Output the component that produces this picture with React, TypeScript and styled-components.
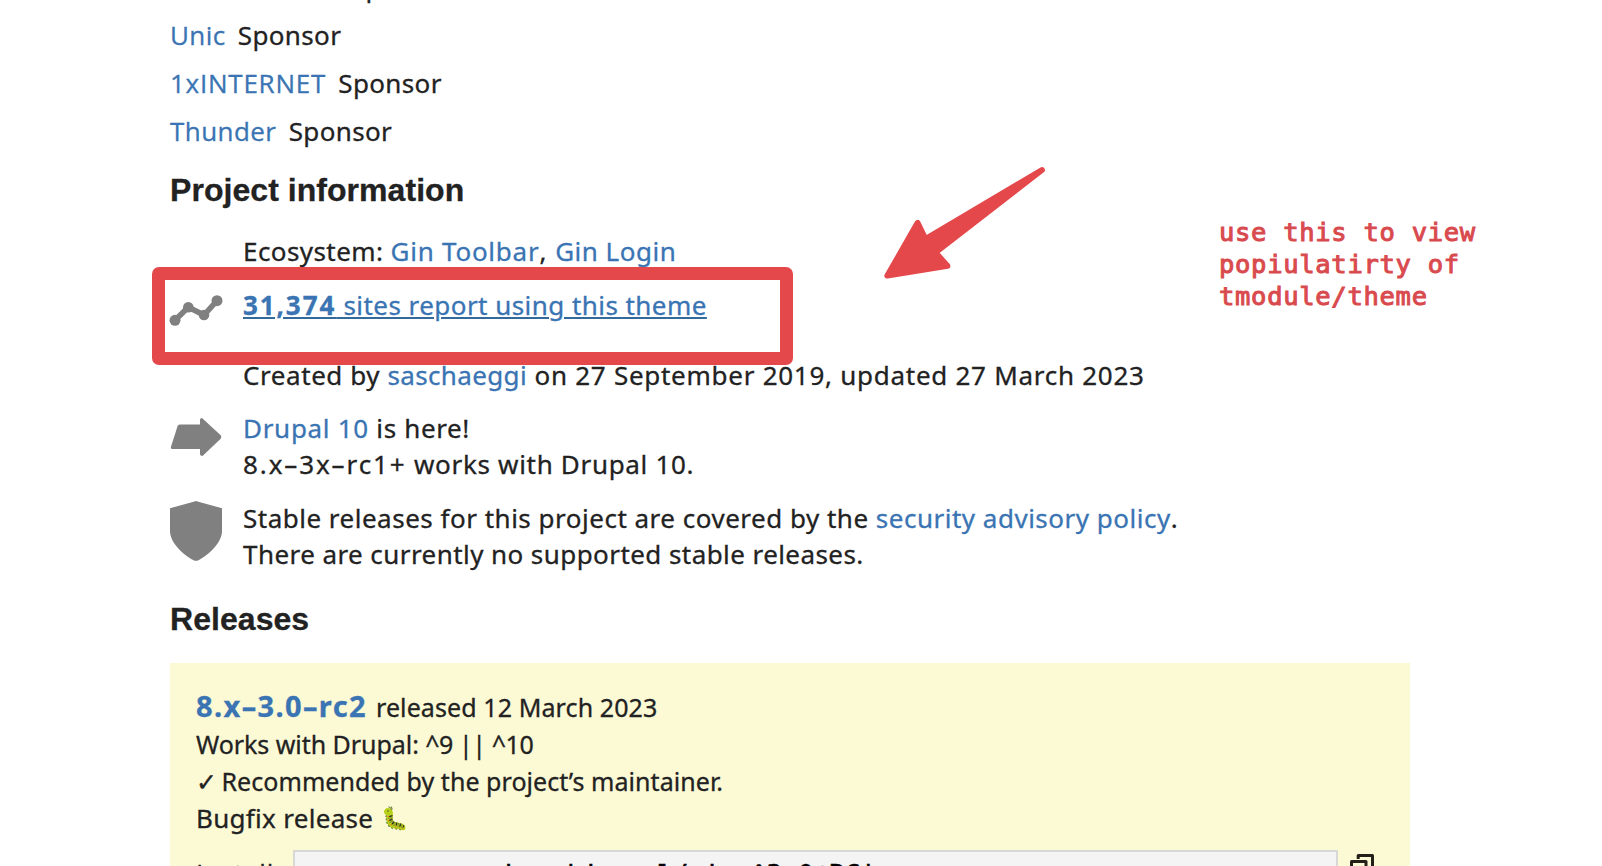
import React from 'react';
import styled, { createGlobalStyle } from 'styled-components';

const GlobalStyle = createGlobalStyle`
  html, body { margin: 0; padding: 0; background: #fff; }
  body { overflow: hidden; }
`;

const RED = '#e4484b';

const Page = styled.main`
  position: relative;
  box-sizing: border-box;
  height: 866px;
  padding-left: 170px;
  overflow: hidden;
  display: flex;
  flex-direction: column;
  color: #222;
  font: 26px/36px 'Noto Sans', 'Open Sans', sans-serif;
  -webkit-text-stroke: 0.3px;
`;

const Text = styled.span<{ $track?: number }>`
  letter-spacing: ${(p) => p.$track ?? 0.35}px;
  white-space: pre;
`;

const Link = styled.a<{ $track?: number }>`
  color: #3a74b3;
  letter-spacing: ${(p) => p.$track ?? 0.35}px;
  text-decoration: none;
  white-space: pre;
`;

const Sponsors = styled.ul`
  display: flex;
  flex: none;
  flex-direction: column;
  gap: 12px;
  margin: -31px 0 22px;
  padding: 0;
  list-style: none;
`;

const Sponsor = styled.li`
  display: flex;
  gap: 12.3px;
`;

const SponsorLink = styled(Link)`
  font-family: 'Open Sans', sans-serif;
`;

const Heading = styled.h3`
  flex: none;
  margin: 0;
  font: bold 32px/38px 'Liberation Sans', Arial, sans-serif;
  letter-spacing: 0.05px;
`;

const InfoList = styled.div`
  display: flex;
  flex: none;
  flex-direction: column;
  margin: 24px 0 28px;
`;

const InfoRow = styled.div<{ $gap?: number }>`
  display: grid;
  grid-template-columns: 52px 1fr;
  column-gap: 21px;
  align-items: start;
  margin-top: ${(p) => p.$gap ?? 0}px;
`;

const InfoBody = styled.div`
  grid-column: 2;
  display: flex;
  flex-direction: column;
`;

const Line = styled.div`
  height: 36px;
  white-space: nowrap;
`;

const UsageLink = styled.a`
  color: #3a74b3;
  letter-spacing: 0.45px;
  text-decoration: underline;
  text-decoration-color: #33699b;
  text-decoration-thickness: 2px;
  text-underline-offset: 2px;
  white-space: pre;
`;

const Count = styled.strong`
  letter-spacing: 1.9px;
`;

const Icon = styled.svg<{ $top: number }>`
  display: block;
  margin-top: ${(p) => p.$top}px;
  overflow: visible;
  fill: #808080;
`;

const ReleaseBox = styled.section`
  box-sizing: border-box;
  flex: none;
  display: flex;
  flex-direction: column;
  width: 1240px;
  height: 260px;
  margin-top: 25px;
  padding: 24px 26px 0;
  background: #fcf9d5;
  font-size: 25px;
`;

const ReleaseTitle = styled.div`
  display: flex;
  align-items: baseline;
  gap: 9px;
  height: 39px;
  line-height: 37px;
`;

const Version = styled(Link)`
  font-size: 29px;
  font-weight: bold;
`;

const ReleaseLine = styled.div`
  display: flex;
  height: 37px;
  line-height: 37px;
`;

const Check = styled.span`
  width: 25.5px;
`;

const Notes = styled.div`
  display: flex;
  align-items: flex-start;
  height: 50px;
  font-size: 26px;
`;

const Bug = styled.span`
  margin-left: 8px;
  font-size: 22px;
  line-height: 34px;
`;

const InstallRow = styled.div`
  display: flex;
  align-items: flex-start;
  font-size: 26px;
`;

const InstallLabel = styled.span`
  width: 97px;
  padding-top: 5px;
  font-family: 'Open Sans', sans-serif;
  letter-spacing: 0.8px;
`;

const Command = styled.code`
  box-sizing: border-box;
  width: 1045px;
  height: 56px;
  padding: 5px 2px;
  border: 2px solid #d8d8d6;
  background: #f4f4f4;
  color: #000;
  font: 26px/36px 'DejaVu Sans Mono', monospace;
  white-space: pre;
  -webkit-text-stroke: 0.6px;
`;

const CopyIcon = styled.svg`
  margin: 4px 0 0 12px;
  fill: none;
  stroke: #222018;
  stroke-width: 3;
  stroke-linejoin: round;
`;

const Highlight = styled.div`
  position: absolute;
  left: 151.5px;
  top: 266.5px;
  box-sizing: border-box;
  width: 641.5px;
  height: 98.5px;
  border: 13.5px solid ${RED};
  border-radius: 7px;
`;

const Pointer = styled.svg`
  position: absolute;
  left: 880px;
  top: 160px;
  fill: ${RED};
  stroke: ${RED};
  stroke-width: 5.8;
  stroke-linejoin: round;
`;

const Note = styled.p`
  position: absolute;
  left: 1219px;
  top: 216px;
  margin: 0;
  color: #d94a4e;
  font: 25.5px/32px 'DejaVu Sans Mono', monospace;
  letter-spacing: 0.7px;
  -webkit-text-stroke: 1px #d94a4e;
`;

const sponsors = [
  { name: 'Factorial GmbH', track: -1.4 },
  { name: 'Unic', track: 0.4 },
  { name: '1xINTERNET', track: 0.75 },
  { name: 'Thunder', track: 0.45 },
];

export default function App() {
  return (
    <Page>
      <GlobalStyle />
      <Sponsors>
        {sponsors.map((s) => (
          <Sponsor key={s.name}>
            <SponsorLink $track={s.track}>{s.name}</SponsorLink>
            <Text>Sponsor</Text>
          </Sponsor>
        ))}
      </Sponsors>

      <Heading>Project information</Heading>
      <InfoList>
        <InfoRow>
          <InfoBody>
            <Line>
              <Text $track={0.42}>{'Ecosystem: '}</Text>
              <Link $track={0.75}>Gin Toolbar</Link>
              <Text $track={1}>{', '}</Text>
              <Link $track={0.5}>Gin Login</Link>
            </Line>
          </InfoBody>
        </InfoRow>
        <InfoRow $gap={18}>
          <Icon $top={8} width="52" height="28" viewBox="0 0 52 28">
            <path d="M5 25.3 18.3 12.2 34 20 47 5.7" fill="none" stroke="#808080" strokeWidth="5.5" />
            <circle cx="5" cy="25.3" r="5.5" />
            <circle cx="18.3" cy="12.2" r="5.3" />
            <circle cx="34" cy="20" r="5.3" />
            <circle cx="47" cy="5.7" r="5.5" />
          </Icon>
          <InfoBody>
            <Line>
              <UsageLink>
                <Count>31,374</Count> sites report using this theme
              </UsageLink>
            </Line>
          </InfoBody>
        </InfoRow>
        <InfoRow $gap={34}>
          <InfoBody>
            <Line>
              <Text $track={0.57}>{'Created by '}</Text>
              <Link $track={0.35}>saschaeggi</Link>
              <Text $track={0.73}>{' on 27 September 2019, updated 27 March 2023'}</Text>
            </Line>
          </InfoBody>
        </InfoRow>
        <InfoRow $gap={17}>
          <Icon $top={8} width="52" height="38" viewBox="0 0 52 38">
            <path d="M9.8 6.5H30V1.8Q30 0 32 0L50.7 17.3Q52 19 50.7 20.7L32.5 38Q30 38 30 36.2V31H2.2Q.4 31 .9 29L7.6 8Q8.2 6.5 9.8 6.5Z" />
          </Icon>
          <InfoBody>
            <Line>
              <Link $track={0.7}>Drupal 10</Link>
              <Text $track={0.65}>{' is here!'}</Text>
            </Line>
            <Line>
              <Text $track={1.9}>8.x–3x–rc1+</Text>
              <Text $track={0.68}>{' works with Drupal 10.'}</Text>
            </Line>
          </InfoBody>
        </InfoRow>
        <InfoRow $gap={18}>
          <Icon $top={1} width="52" height="60" viewBox="0 0 52 60">
            <path d="M24.5.4Q26-.2 27.5.4L52 7.3V30C52 42 38 54.5 28.5 59.2Q26 60.5 23.5 59.2C14 54.5 0 42 0 30V7.3Z" />
          </Icon>
          <InfoBody>
            <Line>
              <Text $track={0.5}>{'Stable releases for this project are covered by the '}</Text>
              <Link $track={0.5}>security advisory policy</Link>
              <Text>.</Text>
            </Line>
            <Line>
              <Text $track={0.43}>There are currently no supported stable releases.</Text>
            </Line>
          </InfoBody>
        </InfoRow>
      </InfoList>

      <Heading>Releases</Heading>
      <ReleaseBox>
        <ReleaseTitle>
          <Version $track={1.38}>8.x–3.0–rc2</Version>
          <Text $track={0.1}>released 12 March 2023</Text>
        </ReleaseTitle>
        <ReleaseLine>
          <Text $track={-0.05}>{'Works with Drupal: '}</Text>
          <Text $track={-0.45}>^9 || ^10</Text>
        </ReleaseLine>
        <ReleaseLine>
          <Check>✓</Check>
          <Text $track={0.05}>Recommended by the project’s maintainer.</Text>
        </ReleaseLine>
        <Notes>
          <Text $track={0.3}>Bugfix release</Text>
          <Bug>🐛</Bug>
        </Notes>
        <InstallRow>
          <InstallLabel>Install:</InstallLabel>
          <Command>composer require 'drupal/gin:^3.0@RC'</Command>
          <CopyIcon width="26" height="32" viewBox="0 0 26 32">
            <path d="M8.2 5V1.5H22.5V24H19" />
            <rect x="1.5" y="7.5" width="14.5" height="22.5" />
          </CopyIcon>
        </InstallRow>
      </ReleaseBox>

      <Highlight />
      <Pointer width="170" height="124" viewBox="880 160 170 124">
        <path d="M1042 170 925.5 239 917.6 222.8 887.3 275.7 947.5 266 935.5 252.5Z" />
      </Pointer>
      <Note>
        use this to view
        <br />
        popiulatirty of
        <br />
        tmodule/theme
      </Note>
    </Page>
  );
}
